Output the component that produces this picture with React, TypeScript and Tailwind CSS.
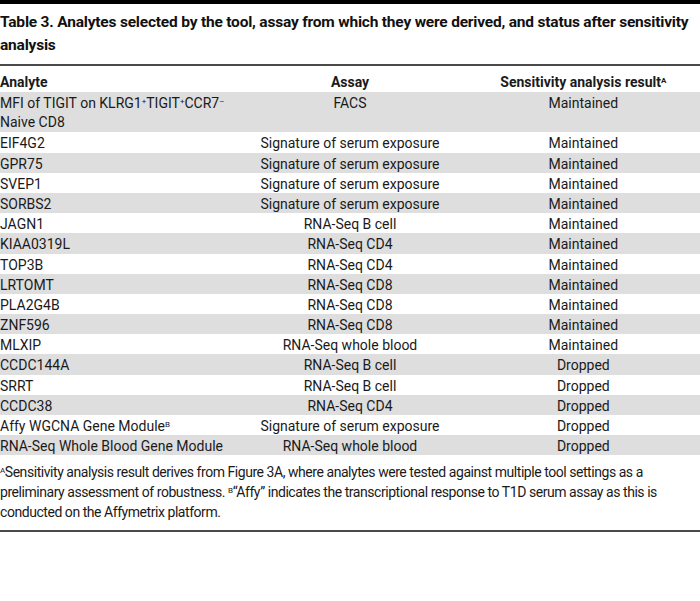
import React from "react";

const Sup = ({ children }: { children: React.ReactNode }) => (
  <sup className="text-[8px] leading-none">{children}</sup>
);

const rows: { a: React.ReactNode; b: string; c: string }[] = [
  {
    a: (
      <>
        MFI of TIGIT on KLRG1<Sup>+</Sup>TIGIT<Sup>+</Sup>CCR7<Sup>–</Sup>
        <br />
        Naive CD8
      </>
    ),
    b: "FACS",
    c: "Maintained",
  },
  { a: "EIF4G2", b: "Signature of serum exposure", c: "Maintained" },
  { a: "GPR75", b: "Signature of serum exposure", c: "Maintained" },
  { a: "SVEP1", b: "Signature of serum exposure", c: "Maintained" },
  { a: "SORBS2", b: "Signature of serum exposure", c: "Maintained" },
  { a: "JAGN1", b: "RNA-Seq B cell", c: "Maintained" },
  { a: "KIAA0319L", b: "RNA-Seq CD4", c: "Maintained" },
  { a: "TOP3B", b: "RNA-Seq CD4", c: "Maintained" },
  { a: "LRTOMT", b: "RNA-Seq CD8", c: "Maintained" },
  { a: "PLA2G4B", b: "RNA-Seq CD8", c: "Maintained" },
  { a: "ZNF596", b: "RNA-Seq CD8", c: "Maintained" },
  { a: "MLXIP", b: "RNA-Seq whole blood", c: "Maintained" },
  { a: "CCDC144A", b: "RNA-Seq B cell", c: "Dropped" },
  { a: "SRRT", b: "RNA-Seq B cell", c: "Dropped" },
  { a: "CCDC38", b: "RNA-Seq CD4", c: "Dropped" },
  {
    a: (
      <>
        Affy WGCNA Gene Module<Sup>B</Sup>
      </>
    ),
    b: "Signature of serum exposure",
    c: "Dropped",
  },
  { a: "RNA-Seq Whole Blood Gene Module", b: "RNA-Seq whole blood", c: "Dropped" },
];

export default function App() {
  return (
    <div
      className="w-[700px] h-[601px] bg-white text-[#1a1a1a] overflow-hidden"
      style={{ fontFamily: "Roboto, 'Liberation Sans', sans-serif" }}
    >
      <div className="h-[4px] bg-black" />
      <h1 className="mt-[7px] text-[15.5px] font-bold leading-[23px] tracking-[-0.2px] text-[#111]">
        Table 3. Analytes selected by the tool, assay from which they were derived, and status after sensitivity analysis
      </h1>
      <div className="mt-[7px] h-[2px] bg-[#4a4a4a]" />
      <div className="grid grid-cols-3 pt-[7px] text-[14px] leading-[19px] font-bold">
        <div>Analyte</div>
        <div className="text-center">Assay</div>
        <div className="text-center">
          Sensitivity analysis result<Sup>A</Sup>
        </div>
      </div>
      <div className="text-[14px]">
        {rows.map((r, i) => (
          <div
            key={i}
            className={`grid grid-cols-3 overflow-hidden pt-[2px] ${
              i === 0 ? "h-[40.4px] leading-[19.2px]" : "h-[20.2px] leading-[18.2px]"
            } ${i % 2 === 0 ? "bg-[#dedede]" : "bg-white"}`}
          >
            <div className="whitespace-nowrap">{r.a}</div>
            <div className="text-center">{r.b}</div>
            <div className="text-center">{r.c}</div>
          </div>
        ))}
      </div>
      <p className="mt-[7px] text-[14px] leading-[20px] tracking-[-0.45px]">
        <Sup>A</Sup>Sensitivity analysis result derives from Figure 3A, where analytes were tested against multiple tool settings as a preliminary assessment of robustness. <Sup>B</Sup>“Affy” indicates the transcriptional response to T1D serum assay as this is conducted on the Affymetrix platform.
      </p>
      <div className="mt-[8px] h-[2px] bg-[#4a4a4a]" />
    </div>
  );
}
